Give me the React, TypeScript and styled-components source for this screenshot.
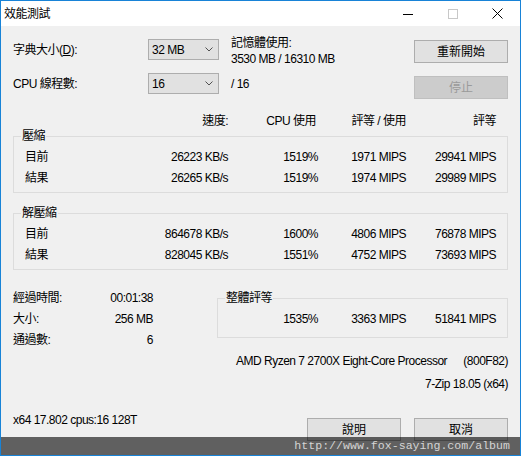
import React from 'react';
import styled, { createGlobalStyle } from 'styled-components';

const GlobalStyle = createGlobalStyle`
  html, body { margin: 0; padding: 0; background: #fff; }
  body {
    font-family: "Liberation Sans", "Noto Sans CJK TC", sans-serif;
    font-size: 12px;
    color: #000;
  }
  * { box-sizing: border-box; }
`;

const Window = styled.div`
  position: relative;
  width: 521px;
  height: 456px;
  border: 1px solid #1883d7;
  display: flex;
  flex-direction: column;
  background: #f0f0f0;
  letter-spacing: -0.5px;
  line-height: 16px;
`;

const TitleBar = styled.div`
  height: 25px;
  flex-shrink: 0;
  background: #fff;
  display: flex;
  align-items: center;
`;

const Caption = styled.div`
  flex: 1;
  padding-left: 3px;
`;

const CaptionButton = styled.div`
  width: 45px;
  height: 25px;
  display: flex;
  align-items: center;
  justify-content: center;
`;

const Client = styled.div`
  flex: 1;
  padding: 0 12px;
  display: flex;
  flex-direction: column;
`;

const TopSection = styled.div`
  display: flex;
  padding-top: 13px;
`;

const SettingsGrid = styled.div`
  flex: 1;
  display: grid;
  grid-template-columns: 135px 71px 1fr;
  grid-template-rows: 21px 21px;
  row-gap: 13px;
  align-items: center;
`;

const Info = styled.div<{ $top?: number }>`
  align-self: start;
  margin-left: 12px;
  margin-top: ${p => p.$top ?? 0}px;
`;

const Combo = styled.div`
  height: 21px;
  border: 1px solid #adadad;
  background: #e1e1e1;
  display: flex;
  align-items: center;
  justify-content: space-between;
  padding: 0 5px 0 3px;
`;

const ButtonColumn = styled.div`
  display: flex;
  flex-direction: column;
  gap: 13px;
  margin-top: 1px;
`;

const Button = styled.div<{ $disabled?: boolean }>`
  width: 94px;
  height: 23px;
  border: 1px solid ${p => (p.$disabled ? '#bfbfbf' : '#adadad')};
  background: ${p => (p.$disabled ? '#cccccc' : '#e1e1e1')};
  color: ${p => (p.$disabled ? '#9a9a9a' : '#000')};
  display: flex;
  align-items: center;
  justify-content: center;
  letter-spacing: 0;
`;

const COLS = '90px 90px 88px 90px 1fr';

const HeaderRow = styled.div`
  display: grid;
  grid-template-columns: 125px ${COLS};
  margin-top: 14px;
  text-align: right;
  & > span:nth-child(3) { padding-right: 2px; }
`;

const Group = styled.fieldset<{ $gap?: number }>`
  margin: ${p => p.$gap ?? 0}px 0 0 0;
  padding: 2px 0 4px 0;
  border: 1px solid #dcdcdc;
  min-width: 0;
`;

const GroupLabel = styled.legend`
  margin-left: 7px;
  padding: 0 1px;
  line-height: 16px;
`;

const DataRow = styled.div<{ $cols?: string }>`
  display: grid;
  grid-template-columns: ${p => p.$cols ?? `124px ${COLS}`};
  height: 21px;
  align-items: center;
  text-align: right;
`;

const RowLabel = styled.span`
  text-align: left;
  padding-left: 11px;
`;

const BottomSection = styled.div`
  display: flex;
  align-items: flex-start;
`;

const Stats = styled.div`
  width: 140px;
  margin-top: 17px;
  display: flex;
  flex-direction: column;
`;

const StatRow = styled.div`
  height: 21px;
  display: flex;
  align-items: center;
  justify-content: space-between;
`;

const OverallGroup = styled(Group)`
  flex: 1;
  margin: 20px 0 0 64px;
  padding: 2px 0 8px 0;
`;

const InfoLine = styled.div<{ $gap: number; $indent?: number }>`
  margin-top: ${p => p.$gap}px;
  padding-left: ${p => p.$indent ?? 0}px;
  display: flex;
  justify-content: space-between;
`;

const Footer = styled.div`
  margin-top: 20px;
  display: flex;
  align-items: flex-start;
  gap: 13px;
`;

const FooterText = styled.div`
  flex: 1;
`;

const FooterButton = styled(Button)`
  margin-top: 6px;
`;

const Watermark = styled.div`
  position: absolute;
  left: 0;
  right: 0;
  bottom: 0;
  height: 18px;
  background: rgba(0, 0, 0, 0.6);
  color: #d4d4d4;
  font-family: "Liberation Mono", monospace;
  font-size: 11.6px;
  letter-spacing: 0;
  line-height: 18px;
  text-align: right;
  padding-right: 10px;
`;

const Chevron = () => (
  <svg width="8" height="5" viewBox="0 0 8 5">
    <polyline points="0.5,0.5 4,4 7.5,0.5" fill="none" stroke="#505050" strokeWidth="1" />
  </svg>
);

type Row = [string, string, string, string, string];

const compress: Row[] = [
  ['目前', '26223 KB/s', '1519%', '1971 MIPS', '29941 MIPS'],
  ['結果', '26265 KB/s', '1519%', '1974 MIPS', '29989 MIPS'],
];

const decompress: Row[] = [
  ['目前', '864678 KB/s', '1600%', '4806 MIPS', '76878 MIPS'],
  ['結果', '828045 KB/s', '1551%', '4752 MIPS', '73693 MIPS'],
];

const stats = [
  ['經過時間:', '00:01:38'],
  ['大小:', '256 MB'],
  ['通過數:', '6'],
];

export default function App() {
  return (
    <>
      <GlobalStyle />
      <Window>
        <TitleBar>
          <Caption>效能測試</Caption>
          <CaptionButton>
            <svg width="10" height="10" viewBox="0 0 10 10">
              <line x1="0" y1="5.5" x2="10" y2="5.5" stroke="#000" strokeWidth="1" />
            </svg>
          </CaptionButton>
          <CaptionButton>
            <svg width="10" height="10" viewBox="0 0 10 10">
              <rect x="0.5" y="0.5" width="9" height="9" fill="none" stroke="#c8c8c8" strokeWidth="1" />
            </svg>
          </CaptionButton>
          <CaptionButton>
            <svg width="11" height="11" viewBox="0 0 11 11">
              <path d="M0.5 0.5 L10.5 10.5 M10.5 0.5 L0.5 10.5" stroke="#000" strokeWidth="1" />
            </svg>
          </CaptionButton>
        </TitleBar>
        <Client>
          <TopSection>
            <SettingsGrid>
              <span>字典大小(<u>D</u>):</span>
              <Combo>
                <span>32 MB</span>
                <Chevron />
              </Combo>
              <Info $top={-4}>
                記憶體使用:
                <br />
                3530 MB / 16310 MB
              </Info>
              <span>CPU 線程數:</span>
              <Combo>
                <span>16</span>
                <Chevron />
              </Combo>
              <Info $top={3}>/ 16</Info>
            </SettingsGrid>
            <ButtonColumn>
              <Button>重新開始</Button>
              <Button $disabled>停止</Button>
            </ButtonColumn>
          </TopSection>

          <HeaderRow>
            <span />
            <span>速度:</span>
            <span>CPU 使用</span>
            <span>評等 / 使用</span>
            <span>評等</span>
          </HeaderRow>

          <Group $gap={-1}>
            <GroupLabel>壓縮</GroupLabel>
            {compress.map(r => (
              <DataRow key={r[0]}>
                <RowLabel>{r[0]}</RowLabel>
                <span>{r[1]}</span>
                <span>{r[2]}</span>
                <span>{r[3]}</span>
                <span>{r[4]}</span>
              </DataRow>
            ))}
          </Group>

          <Group $gap={12}>
            <GroupLabel>解壓縮</GroupLabel>
            {decompress.map(r => (
              <DataRow key={r[0]}>
                <RowLabel>{r[0]}</RowLabel>
                <span>{r[1]}</span>
                <span>{r[2]}</span>
                <span>{r[3]}</span>
                <span>{r[4]}</span>
              </DataRow>
            ))}
          </Group>

          <BottomSection>
            <Stats>
              {stats.map(([k, v]) => (
                <StatRow key={k}>
                  <span>{k}</span>
                  <span>{v}</span>
                </StatRow>
              ))}
            </Stats>
            <OverallGroup>
              <GroupLabel>整體評等</GroupLabel>
              <DataRow $cols="100px 88px 90px 1fr">
                <span>1535%</span>
                <span>3363 MIPS</span>
                <span>51841 MIPS</span>
              </DataRow>
            </OverallGroup>
          </BottomSection>

          <InfoLine $gap={3} $indent={223}>
            <span>AMD Ryzen 7 2700X Eight-Core Processor</span>
            <span>(800F82)</span>
          </InfoLine>
          <InfoLine $gap={7}>
            <span />
            <span>7-Zip 18.05 (x64)</span>
          </InfoLine>

          <Footer>
            <FooterText>x64 17.802 cpus:16 128T</FooterText>
            <FooterButton>說明</FooterButton>
            <FooterButton>取消</FooterButton>
          </Footer>
        </Client>
        <Watermark>http://www.fox-saying.com/album</Watermark>
      </Window>
    </>
  );
}
